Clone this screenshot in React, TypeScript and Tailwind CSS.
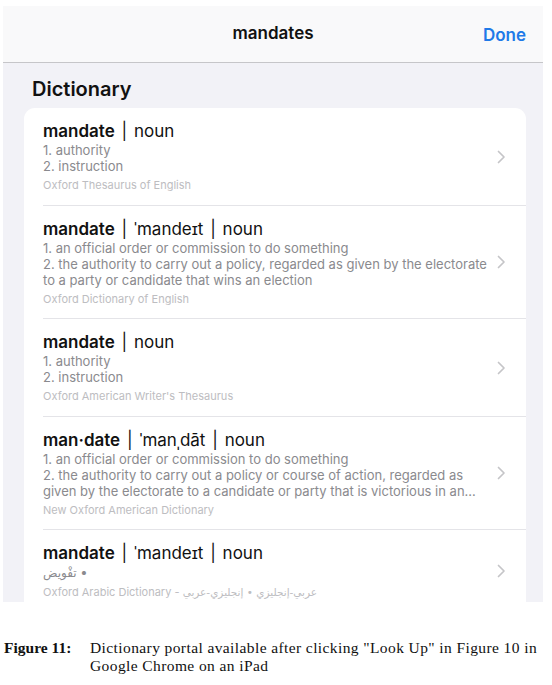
const ui = { fontFamily: 'Inter, "Liberation Sans", sans-serif' };
const serif = { fontFamily: '"Liberation Serif", "DejaVu Serif", serif' };
const arabic = { fontFamily: '"DejaVu Sans", Inter, sans-serif' };

type Entry = {
  word: string;
  pron?: string;
  lines: string[];
  clampLast?: boolean;
  arabic?: boolean;
  source: string;
};

const entries: Entry[] = [
  {
    word: "mandate",
    lines: ["1. authority", "2. instruction"],
    source: "Oxford Thesaurus of English",
  },
  {
    word: "mandate",
    pron: "ˈmandeɪt",
    lines: [
      "1. an official order or commission to do something",
      "2. the authority to carry out a policy, regarded as given by the electorate to a party or candidate that wins an election",
    ],
    source: "Oxford Dictionary of English",
  },
  {
    word: "mandate",
    lines: ["1. authority", "2. instruction"],
    source: "Oxford American Writer's Thesaurus",
  },
  {
    word: "man·date",
    pron: "ˈmanˌdāt",
    lines: [
      "1. an official order or commission to do something",
      "2. the authority to carry out a policy or course of action, regarded as given by the electorate to a candidate or party that is victorious in an election",
    ],
    clampLast: true,
    source: "New Oxford American Dictionary",
  },
  {
    word: "mandate",
    pron: "ˈmandeɪt",
    lines: [],
    arabic: true,
    source: "Oxford Arabic Dictionary - ",
  },
];

function Chevron() {
  return (
    <svg width="9" height="14" viewBox="0 0 9 14" className="shrink-0">
      <path d="M1.5 1.5 7 7l-5.5 5.5" fill="none" stroke="#c5c5c8" strokeWidth="1.7" strokeLinecap="round" strokeLinejoin="round" />
    </svg>
  );
}

function Pipe() {
  return <span className="mx-[2px]"> | </span>;
}

function Row({ e, last }: { e: Entry; last: boolean }) {
  return (
    <div className="pl-[19px]">
      <div className={`flex items-center pr-[20px] pt-[12px] pb-[11.5px] ${last ? "" : "border-b border-[#e4e4e8]"}`}>
        <div className="w-[452px]">
          <div className="text-[17px] leading-[22px] text-[#111]">
            <span className="font-semibold">{e.word}</span>
            <Pipe />
            {e.pron && (
              <>
                <span>{e.pron}</span>
                <Pipe />
              </>
            )}
            <span>noun</span>
          </div>
          <div className="text-[13px] leading-[16px] text-[#8a8a8e]">
            {e.lines.map((l, i) => (
              <div key={i} className={e.clampLast && i === e.lines.length - 1 ? "line-clamp-2" : ""}>
                {l}
              </div>
            ))}
            {e.arabic && (
              <div>
                <bdi dir="rtl" style={arabic} className="text-[12px]">تفْويض</bdi> •
              </div>
            )}
          </div>
          <div className="mt-[3px] text-[11px] leading-[16px] text-[#bdbdc1]">
            {e.source}
            {e.arabic && (
              <bdi dir="rtl" style={arabic} className="text-[10.5px]">
                عربي-إنجليزي • إنجليزي-عربي
              </bdi>
            )}
          </div>
        </div>
        <div className="flex-1" />
        <Chevron />
      </div>
    </div>
  );
}

export default function App() {
  return (
    <div className="w-[552px] h-[685px] bg-white overflow-hidden">
      <div className="ml-[3px] mt-[6px] w-[540px] h-[596px] bg-[#f2f2f7] overflow-hidden" style={ui}>
        <div className="relative h-[57px] bg-[#f9f9fa] border-b border-[#c6c6c9] flex items-center justify-center">
          <span className="text-[17px] font-semibold text-[#111]">mandates</span>
          <span className="absolute right-[17px] top-[17px] text-[17px] font-semibold text-[#1f7ae8]">Done</span>
        </div>
        <h2 className="pl-[29px] pt-[14px] pb-[7px] text-[20px] leading-[24px] font-semibold text-[#111]">Dictionary</h2>
        <div className="ml-[21px] mr-[17px] bg-white rounded-[11px]">
          {entries.map((e, i) => (
            <Row key={i} e={e} last={i === entries.length - 1} />
          ))}
        </div>
      </div>
      <div className="mt-[37px] pl-[4px] pr-[6px] flex text-[15.5px] leading-[18px] text-[#111]" style={serif}>
        <div className="w-[86px] shrink-0 font-bold">Figure 11:</div>
        <div className="tracking-[0.4px]">Dictionary portal available after clicking "Look Up" in Figure 10 in Google Chrome on an iPad</div>
      </div>
    </div>
  );
}
